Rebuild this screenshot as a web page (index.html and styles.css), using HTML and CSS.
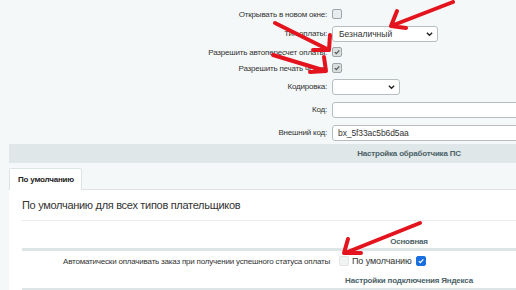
FILE: index.html
```html
<!DOCTYPE html>
<html lang="ru">
<head>
    <meta charset="UTF-8">
    <meta name="viewport" content="width=device-width, initial-scale=1.0">
    <title>Настройка платежной системы</title>
    <link rel="stylesheet" href="styles.css">
</head>
<body>

    <div class="page">

        <!-- Основные поля -->
        <div class="form">
            <div class="row row-a">
                <div class="label">Открывать в новом окне:</div>
                <div class="field"><span class="cb"></span></div>
            </div>
            <div class="row row-b">
                <div class="label">Тип оплаты:</div>
                <div class="field">
                    <div class="select select-wide">Безналичный
                        <svg class="chev" viewBox="0 0 8 6"><path d="M1 1.5 L4 4.5 L7 1.5"/></svg>
                    </div>
                </div>
            </div>
            <div class="row row-c">
                <div class="label">Разрешить автопересчет оплаты:</div>
                <div class="field"><span class="cb checked"><svg viewBox="0 0 10 10"><path d="M2.2 5.2 L4.2 7.1 L7.9 3"/></svg></span></div>
            </div>
            <div class="row row-d">
                <div class="label">Разрешить печать чеков:</div>
                <div class="field"><span class="cb checked"><svg viewBox="0 0 10 10"><path d="M2.2 5.2 L4.2 7.1 L7.9 3"/></svg></span></div>
            </div>
            <div class="row row-e">
                <div class="label">Кодировка:</div>
                <div class="field">
                    <div class="select select-small">
                        <svg class="chev" viewBox="0 0 8 6"><path d="M1 1.5 L4 4.5 L7 1.5"/></svg>
                    </div>
                </div>
            </div>
            <div class="row row-e">
                <div class="label">Код:</div>
                <div class="field"><div class="input"></div></div>
            </div>
            <div class="row row-f">
                <div class="label">Внешний код:</div>
                <div class="field"><div class="input">bx_5f33ac5b6d5aa</div></div>
            </div>
        </div>

        <div class="heading-band">Настройка обработчика ПС</div>

        <!-- Вкладки -->
        <div class="tabs">
            <div class="tab">По умолчанию</div>
        </div>

        <div class="panel">
            <div class="panel-title">По умолчанию для всех типов плательщиков</div>

            <div class="sub-heading sub-first">Основная</div>
            <div class="prow">
                <div class="plabel">Автоматически оплачивать заказ при получении успешного статуса оплаты</div>
                <div class="pfield">
                    <span class="cb disabled"></span>
                    <span class="def-label">По умолчанию</span>
                    <span class="cb blue"><svg viewBox="0 0 10 10"><path d="M2.2 5.2 L4.2 7.1 L7.9 3"/></svg></span>
                </div>
            </div>
            <div class="sub-heading sub-second">Настройки подключения Яндекса</div>
        </div>
    </div>

    <!-- Стрелки поверх скриншота -->
    <svg class="arrows" viewBox="0 0 516 290">
        <path d="M453 2 L391 26 M397 11 L391 26 L406 28"/>
        <path d="M275 23 L329 50 M330 35 L329 50 L313 50"/>
        <path d="M273 55 L326 71 M324 57 L326 71 L310 72"/>
        <path d="M420 223 L345 253 M348 239 L344 253 L361 253"/>
    </svg>

</body>
</html>
```

FILE: styles.css
```css
body {
    margin: 0;
    padding: 0;
    background-color: #f5f8f9;
    font-family: "Liberation Sans", Arial, sans-serif;
    color: #333;
    overflow: hidden;
    width: 516px;
    height: 290px;
    position: relative;
}

.page {
    width: 800px;
    padding-left: 9px;
}

/* Основные поля */
.form {
    padding-top: 4px;
}

.row {
    display: grid;
    grid-template-columns: 318px 1fr;
    column-gap: 5px;
    align-items: center;
    font-size: 8px;
    letter-spacing: -0.2px;
}

.row-a { height: 20px; }
.row-b { height: 19px; }
.row-c { height: 18px; }
.row-d { height: 14px; }
.row-e { height: 23px; }
.row-f { height: 23px; }

.label {
    text-align: right;
    color: #333;
}

.field {
    display: flex;
    align-items: center;
}

/* Чекбоксы */
.cb {
    display: inline-block;
    width: 8px;
    height: 8px;
    border: 1px solid #9ea6a9;
    border-radius: 2px;
    background-color: #e8ecee;
    position: relative;
}

.cb svg {
    display: block;
    width: 8px;
    height: 8px;
    fill: none;
    stroke: #555;
    stroke-width: 1.6;
}

.cb.checked {
    background-color: #d9dedf;
}

.cb.disabled {
    border-color: #e1e4e5;
    background-color: #f2f3f3;
}

.cb.blue {
    background-color: #1a6fe0;
    border-color: #1a6fe0;
}

.cb.blue svg {
    stroke: #fff;
}

/* Селекты и поля ввода */
.select {
    box-sizing: border-box;
    height: 16px;
    border: 1px solid #b6bec1;
    border-radius: 3px;
    background-color: #fff;
    font-size: 8.5px;
    letter-spacing: 0;
    line-height: 14px;
    padding-left: 6px;
    position: relative;
}

.select-wide { width: 106px; }
.select-small { width: 68px; }

.chev {
    position: absolute;
    right: 4px;
    top: 4px;
    width: 7px;
    height: 6px;
    fill: none;
    stroke: #222;
    stroke-width: 1.6;
}

.input {
    box-sizing: border-box;
    width: 300px;
    height: 16px;
    border: 1px solid #b6bec1;
    border-radius: 3px;
    background-color: #fff;
    font-size: 8.5px;
    letter-spacing: -0.1px;
    line-height: 14px;
    padding-left: 5px;
}

/* Заголовок */
.heading-band {
    height: 19px;
    line-height: 19px;
    background-color: #e0e7e9;
    color: #4b6267;
    font-weight: bold;
    font-size: 8px;
    letter-spacing: -0.2px;
    text-align: center;
}

/* Вкладки */
.tabs {
    display: flex;
    padding-top: 5px;
}

.tab {
    box-sizing: border-box;
    width: 73px;
    height: 22px;
    line-height: 21px;
    padding-left: 8px;
    background-color: #fff;
    border: 1px solid #dde4e6;
    border-bottom: none;
    border-radius: 2px 2px 0 0;
    font-size: 8px;
    letter-spacing: -0.2px;
    font-weight: bold;
    color: #222;
    margin-bottom: -1px;
    position: relative;
}

.panel {
    background-color: #fff;
    border-top: 1px solid #dde4e6;
    padding: 0 13px;
    min-height: 120px;
}

.panel-title {
    height: 30px;
    line-height: 30px;
    font-size: 11px;
    letter-spacing: -0.3px;
    color: #333;
    border-bottom: 1px solid #e8ecee;
}

.sub-heading {
    text-align: center;
    font-size: 8px;
    letter-spacing: -0.2px;
    font-weight: bold;
    color: #4b6267;
    line-height: 12px;
    border-bottom: 3px solid #dde5e7;
}

.sub-first {
    padding-top: 15px;
}

.sub-second {
    padding-top: 4px;
    height: 13px;
}

.prow {
    display: grid;
    grid-template-columns: 308px 1fr;
    column-gap: 9px;
    align-items: center;
    height: 20px;
    font-size: 8px;
    letter-spacing: -0.2px;
}

.plabel {
    text-align: right;
}

.pfield {
    display: flex;
    align-items: center;
    gap: 2px;
}

.def-label {
    margin-left: 1px;
    margin-right: 2px;
    font-size: 9px;
    letter-spacing: -0.1px;
}

/* Красные стрелки */
.arrows {
    position: absolute;
    left: 0;
    top: 0;
    width: 516px;
    height: 290px;
    fill: none;
    stroke: #e3141d;
    stroke-width: 4;
    stroke-linecap: round;
    stroke-linejoin: round;
}
```
